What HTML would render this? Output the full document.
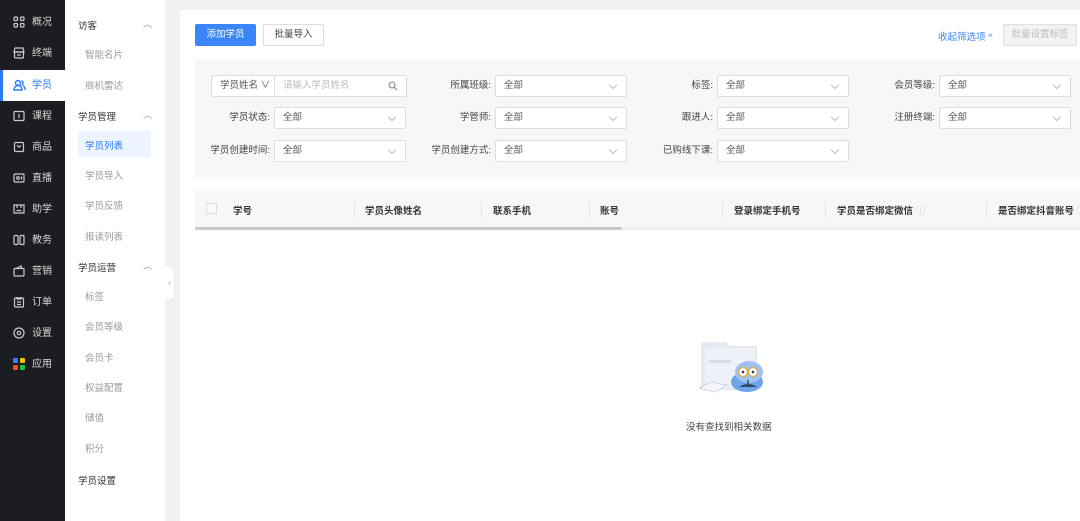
<!DOCTYPE html>
<html><head><meta charset="utf-8"><style>
*{margin:0;padding:0;box-sizing:border-box}
body{width:1080px;height:521px;overflow:hidden;background:#f0f1f3;font-family:"Liberation Sans","Noto Sans CJK SC",sans-serif;font-size:10px;color:#333;position:relative}
.abs{position:absolute}
#nav{left:0;top:0;width:65px;height:521px;background:#1c1d22}
.ni{position:absolute;left:0;width:65px;height:31px;color:#d8d8d8;font-size:10px;line-height:31px;padding-left:32px}
.ni svg{position:absolute;left:13px;top:9px}
.ni.act{background:#fff;color:#2b7bf5;border-left:3px solid #2b7bf5;padding-left:29px}
.ni.act svg{left:10px}
#sub{left:65px;top:0;width:100px;height:521px;background:#fff}
.si{position:absolute;left:20px;color:#999;font-size:9.5px}
.sh{position:absolute;left:13px;color:#333;font-size:9.5px}
.car{position:absolute;left:78px;color:#999;font-size:9px}
#main{left:180px;top:10px;width:900px;height:511px;background:#fff}
.btn{position:absolute;height:22px;line-height:20px;font-size:9.5px;text-align:center;border-radius:2px}
#filt{left:195px;top:59px;width:885px;height:118px;background:#f7f7f8}
.lb{position:absolute;font-size:9.5px;color:#444;text-align:right;width:90px;line-height:22px;white-space:nowrap}
.sel{position:absolute;width:132px;height:22px;background:#fff;border:1px solid #ddd;border-radius:2px;font-size:9.5px;color:#555;line-height:20px;padding-left:8px}
.sel:after{content:"";position:absolute;right:10px;top:6px;width:5px;height:5px;border-right:1px solid #bbb;border-bottom:1px solid #bbb;transform:rotate(45deg)}
#th{left:195px;top:191px;width:885px;height:36px;background:#f7f7f8;font-size:9.5px;font-weight:bold;color:#333;overflow:hidden}
.tc{position:absolute;top:12px;white-space:nowrap}
.sep{position:absolute;top:10px;width:1px;height:16px;background:#e3e3e3}
</style></head><body>
<div id="nav" class="abs">
<div class="ni" style="top:7px"><svg width="12" height="12" viewBox="0 0 12 12" fill="none" stroke="#ccc" stroke-width="1.2"><rect x="1" y="1" width="3.5" height="3.5" rx="1"/><rect x="7.5" y="1" width="3.5" height="3.5" rx="1"/><rect x="1" y="7.5" width="3.5" height="3.5" rx="1"/><rect x="7.5" y="7.5" width="3.5" height="3.5" rx="1"/></svg>概况</div>
<div class="ni" style="top:38px"><svg width="12" height="12" viewBox="0 0 12 12" fill="none" stroke="#ccc" stroke-width="1.2"><path d="M2 1h8l1 4H1z"/><rect x="1.5" y="5" width="9" height="6" rx="1"/><path d="M4 8h4"/></svg>终端</div>
<div class="ni act" style="top:70px"><svg width="13" height="12" viewBox="0 0 13 12" fill="none" stroke="#2b7bf5" stroke-width="1.4"><circle cx="5" cy="4" r="2.5"/><path d="M1 11c0-3 2-4.5 4-4.5s4 1.5 4 4.5z"/><path d="M8.5 1.8a2.3 2.3 0 010 4.4M10 7c1.5.6 2.3 2 2.3 4"/></svg>学员</div>
<div class="ni" style="top:101px"><svg width="12" height="12" viewBox="0 0 12 12" fill="none" stroke="#ccc" stroke-width="1.2"><rect x="1" y="1.5" width="10" height="9" rx="1"/><path d="M6 4v4"/></svg>课程</div>
<div class="ni" style="top:132px"><svg width="12" height="12" viewBox="0 0 12 12" fill="none" stroke="#ccc" stroke-width="1.2"><rect x="1.5" y="1.5" width="9" height="9" rx="1"/><path d="M4 4.5l2 1.5 2-1.5"/></svg>商品</div>
<div class="ni" style="top:163px"><svg width="12" height="12" viewBox="0 0 12 12" fill="none" stroke="#ccc" stroke-width="1.2"><rect x="1" y="2" width="10" height="8" rx="1"/><circle cx="5" cy="6" r="1.3"/><path d="M8.5 4.5v3"/></svg>直播</div>
<div class="ni" style="top:194px"><svg width="12" height="12" viewBox="0 0 12 12" fill="none" stroke="#ccc" stroke-width="1.2"><path d="M1 2h10v8H1z M4 2v3M8 2v3M3.5 7.5h5"/></svg>助学</div>
<div class="ni" style="top:225px"><svg width="12" height="12" viewBox="0 0 12 12" fill="none" stroke="#ccc" stroke-width="1.2"><rect x="1" y="1.5" width="4" height="9" rx="1"/><rect x="7" y="1.5" width="4" height="9" rx="1"/></svg>教务</div>
<div class="ni" style="top:256px"><svg width="12" height="12" viewBox="0 0 12 12" fill="none" stroke="#ccc" stroke-width="1.2"><rect x="1" y="3.5" width="10" height="7.5" rx="1"/><path d="M3 3.5l5-2.5 1 2.5"/></svg>营销</div>
<div class="ni" style="top:287px"><svg width="12" height="12" viewBox="0 0 12 12" fill="none" stroke="#ccc" stroke-width="1.2"><rect x="1.5" y="2" width="9" height="9" rx="1"/><path d="M4 1v2h4V1M4 6h4M4 8.5h4"/></svg>订单</div>
<div class="ni" style="top:318px"><svg width="12" height="12" viewBox="0 0 12 12" fill="none" stroke="#ccc" stroke-width="1.2"><circle cx="6" cy="6" r="5"/><circle cx="6" cy="6" r="1.7"/></svg>设置</div>
<div class="ni" style="top:349px"><svg width="12" height="12" viewBox="0 0 12 12"><rect x="0" y="0" width="5" height="5" rx="1" fill="#3d7bf5"/><rect x="7" y="0" width="5" height="5" rx="1" fill="#f5c400"/><rect x="0" y="7" width="5" height="5" rx="1" fill="#f5502a"/><rect x="7" y="7" width="5" height="5" rx="1" fill="#22c23c"/></svg>应用</div>
</div>
<div id="sub" class="abs">
<div class="sh" style="top:18px">访客</div><div class="car" style="top:17px">︿</div>
<div class="si" style="top:47px">智能名片</div>
<div class="si" style="top:78px">商机雷达</div>
<div class="sh" style="top:109px">学员管理</div><div class="car" style="top:108px">︿</div>
<div style="position:absolute;left:13px;top:131px;width:73px;height:26px;background:#edf3ff;border-radius:2px"></div>
<div class="si" style="top:138px;color:#2b7bf5">学员列表</div>
<div class="si" style="top:168px">学员导入</div>
<div class="si" style="top:198px">学员反馈</div>
<div class="si" style="top:229px">报读列表</div>
<div class="sh" style="top:260px">学员运营</div><div class="car" style="top:259px">︿</div>
<div class="si" style="top:289px">标签</div>
<div class="si" style="top:319px">会员等级</div>
<div class="si" style="top:350px">会员卡</div>
<div class="si" style="top:380px">权益配置</div>
<div class="si" style="top:410px">储值</div>
<div class="si" style="top:441px">积分</div>
<div class="sh" style="top:473px">学员设置</div>
</div>
<div class="abs" style="left:165px;top:267px;width:9px;height:32px;background:#fff;border-radius:0 5px 5px 0;color:#999;font-size:8px;line-height:32px;text-align:center">‹</div>
<div id="main" class="abs"></div>
<div class="btn" style="left:195px;top:24px;width:61px;background:#3a86f8;color:#fff;border:1px solid #3a86f8">添加学员</div>
<div class="btn" style="left:263px;top:24px;width:61px;background:#fff;color:#444;border:1px solid #ddd">批量导入</div>
<div class="abs" style="left:938px;top:29px;color:#3a86f8;font-size:9.5px">收起筛选项 ^</div>
<div class="btn" style="left:1003px;top:24px;width:74px;background:#f3f3f3;color:#bbb;border:1px solid #e0e0e0">批量设置标签</div>
<div id="filt" class="abs"></div>
<div class="abs" style="left:211px;top:75px;width:196px;height:22px;background:#fff;border:1px solid #ddd;border-radius:2px;font-size:9.5px;line-height:20px">
<span style="position:absolute;left:8px;color:#555">学员姓名 ∨</span>
<span style="position:absolute;left:62px;top:0;width:1px;height:20px;background:#ddd"></span>
<span style="position:absolute;left:71px;color:#bbb">请输入学员姓名</span>
<svg style="position:absolute;right:8px;top:5px" width="10" height="10" viewBox="0 0 10 10" fill="none" stroke="#888" stroke-width="1.1"><circle cx="4" cy="4" r="3"/><path d="M6.3 6.3L9 9"/></svg></div>
<div class="lb" style="left:401px;top:75px">所属班级:</div><div class="sel" style="left:495px;top:75px">全部</div>
<div class="lb" style="left:623px;top:75px">标签:</div><div class="sel" style="left:717px;top:75px">全部</div>
<div class="lb" style="left:845px;top:75px">会员等级:</div><div class="sel" style="left:939px;top:75px">全部</div>
<div class="lb" style="left:180px;top:107px">学员状态:</div><div class="sel" style="left:274px;top:107px">全部</div>
<div class="lb" style="left:401px;top:107px">学管师:</div><div class="sel" style="left:495px;top:107px">全部</div>
<div class="lb" style="left:623px;top:107px">跟进人:</div><div class="sel" style="left:717px;top:107px">全部</div>
<div class="lb" style="left:845px;top:107px">注册终端:</div><div class="sel" style="left:939px;top:107px">全部</div>
<div class="lb" style="left:180px;top:140px">学员创建时间:</div><div class="sel" style="left:274px;top:140px">全部</div>
<div class="lb" style="left:401px;top:140px">学员创建方式:</div><div class="sel" style="left:495px;top:140px">全部</div>
<div class="lb" style="left:623px;top:140px">已购线下课:</div><div class="sel" style="left:717px;top:140px">全部</div>
<div id="th" class="abs">
<div style="position:absolute;left:11px;top:12px;width:11px;height:11px;border:1px solid #ddd;background:#fafafa"></div>
<div class="tc" style="left:38px">学号</div>
<div class="sep" style="left:159px"></div><div class="tc" style="left:170px">学员头像姓名</div>
<div class="sep" style="left:286px"></div><div class="tc" style="left:298px">联系手机</div>
<div class="sep" style="left:394px"></div><div class="tc" style="left:405px">账号</div>
<div class="sep" style="left:527px"></div><div class="tc" style="left:539px">登录绑定手机号</div>
<div class="sep" style="left:630px"></div><div class="tc" style="left:642px">学员是否绑定微信 <span style="color:#ccc;font-weight:normal">ⓘ</span></div>
<div class="sep" style="left:791px"></div><div class="tc" style="left:803px">是否绑定抖音账号 <span style="color:#ccc;font-weight:normal">ⓘ</span></div>
</div>
<div class="abs" style="left:195px;top:227px;width:885px;height:3px;background:#eee"></div>
<div class="abs" style="left:195px;top:227px;width:427px;height:3px;background:#c8c8c8;border-radius:2px"></div>
<svg class="abs" style="left:695px;top:338px" width="75" height="62" viewBox="0 0 75 62">
<path d="M6 4h25l4 4h27v44H6z" fill="#e4e9f2"/>
<path d="M10 10h50v40H10z" fill="#eef2f8"/>
<rect x="14" y="22" width="22" height="3" fill="#d7dee9"/>
<path d="M4 50l12-6 16 3-12 7z" fill="#f6f8fb" stroke="#c9d4e3"/>
<ellipse cx="52" cy="44" rx="16" ry="10" fill="#6fa3ea"/>
<ellipse cx="54" cy="34" rx="14" ry="11" fill="#9ec2f2"/>
<circle cx="48" cy="34" r="4.5" fill="#fff" stroke="#e0a93a" stroke-width="1.3"/>
<circle cx="58" cy="34" r="4.5" fill="#fff" stroke="#e0a93a" stroke-width="1.3"/>
<circle cx="48" cy="34" r="1.3" fill="#333"/><circle cx="58" cy="34" r="1.3" fill="#333"/>
<path d="M44 49q9-6 18 0z" fill="#2e4668"/><path d="M53 42v4" stroke="#2e4668" stroke-width="1.5"/>
</svg>
<div class="abs" style="left:686px;top:419px;font-size:9.5px;color:#444">没有查找到相关数据</div>
</body></html>
